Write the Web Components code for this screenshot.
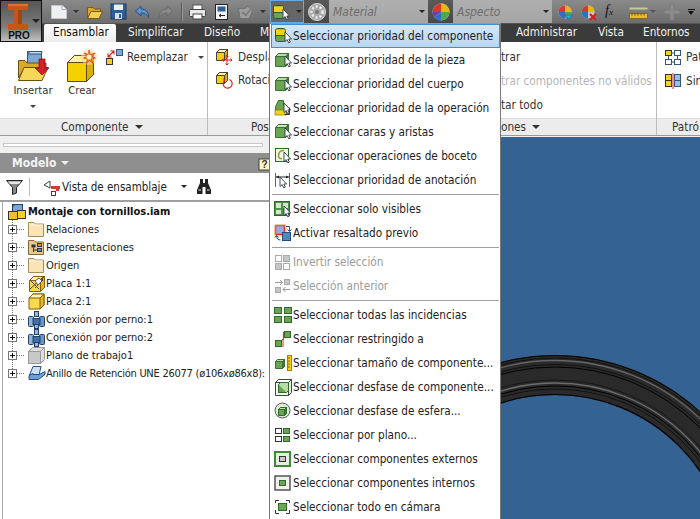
<!DOCTYPE html>
<html>
<head>
<meta charset="utf-8">
<title>Inventor</title>
<style>
html, body { margin: 0; padding: 0; background: #fff; }
body { font-family: "DejaVu Sans Condensed", "Noto Sans", sans-serif; font-size: 12px; }
</style>
</head>
<body>
<app-shell></app-shell>
<script>
const FONT = `"DejaVu Sans Condensed", "Noto Sans", sans-serif`;

// white arrow pointer used by most of the select icons
const cursor = (x, y) => `<path transform="translate(${x} ${y})" d="M0 0V9.5L2.2 7.6 3.7 10.8 5.3 10.1 3.8 7H6.6Z" fill="#fff" stroke="#2b3b4b" stroke-width=".9" stroke-linejoin="round"/>`;
const box = (x, y, w, h, fill, stroke = '#2f6a2c') => `<rect x="${x}.5" y="${y}.5" width="${w - 1}" height="${h - 1}" fill="${fill}" stroke="${stroke}"/>`;
const cube = (x, y, s, d, front, top, side, line) => `<path d="M${x + .5} ${y + d + .5}L${x + d + .5} ${y + .5}H${x + s + d + .5}V${y + s + .5}L${x + s + .5} ${y + s + d + .5}H${x + .5}Z" fill="${front}" stroke="${line}"/><path d="M${x + .5} ${y + d + .5}L${x + d + .5} ${y + .5}H${x + s + d + .5}L${x + s + .5} ${y + d + .5}Z" fill="${top}" stroke="${line}"/><path d="M${x + s + .5} ${y + d + .5}L${x + s + d + .5} ${y + .5}V${y + s + .5}L${x + s + .5} ${y + s + d + .5}Z" fill="${side}" stroke="${line}"/>`;
const G = '#6ba552', GL = '#b9dca8', GD = '#3f7f35', Y = '#f6d312';

const ICONS = {
  comp: `<rect x="1.500" y="1.500" width="10" height="13" rx="2" fill="${G}" stroke="#2f5a2c"/><path d="M2 2.500H11V8H2Z" fill="${Y}"/><path d="M1.500 8.500H11.500" stroke="#2f5a2c"/>${cursor(11, 5)}`,
  part: `${cube(1, 2, 10, 3, G, GL, GD, '#3d6f36')}${cursor(11, 5)}`,
  body: `${cube(1, 2, 10, 3, G, GL, GD, '#3d6f36')}${cursor(11, 5)}`,
  feature: `<path d="M1.5 15.5V7.5L4.5 1.5H9.5V6.5H13V15.5Z" fill="${G}" stroke="#3d6f36"/><rect x="1" y="11" width="11" height="5" fill="${Y}" stroke="#6a6a10" stroke-width=".6"/>${cursor(10, 4)}<path d="M15.5 8.5v7h-5" fill="none" stroke="#333"/>`,
  faces: `${cube(1, 1, 10, 3, G, '#cfe6c2', GD, '#3d6f36')}${cursor(11, 5)}`,
  sketch: `${box(1, 1, 14, 14, '#f1f6e6', '#2f6a2c')}<path d="M10 3.5C6 3 4.500 6 4.500 9 4.500 11 6 12 8 11.500" fill="none" stroke="#8a9a20" stroke-width="1.400"/>${cursor(10, 5)}`,
  annot: `<path d="M1.500 2v14M15.500 2v14" stroke="#2f8a2c"/><path d="M2 6H15" stroke="#222"/><path d="M2 6l3-1.500v3zM15 6l-3-1.500v3z" fill="#222"/>${cursor(6, 6)}`,
  visible: `${box(0, 1, 16, 15, '#4d9448', '#2c6a2a')}<rect x="2" y="3" width="5" height="5" fill="#d6e8c9"/><rect x="9" y="3" width="5" height="5" fill="#d6e8c9"/><rect x="2" y="10" width="5" height="4" fill="#d6e8c9"/>${cursor(10, 6)}`,
  preview: `<rect x="1.500" y="1.500" width="9" height="9" fill="#8fb1de" stroke="#d8381e" stroke-width="1.500"/><rect x="1" y="1" width="11" height="11" fill="none" stroke="#f6c24a" stroke-opacity=".7"/><rect x="8.500" y="8.500" width="8" height="8" fill="#4f86c6" stroke="#1f4f86"/><path d="M12 2.500h3.500V7M13.500 5.500l2 2 2-2M2.500 12c0 3 2 4 4 4M1 13.500l1.500-2 2 2" fill="none" stroke="#1f4f86"/>`,
  invert: `<rect x="1.500" y="2.500" width="6" height="6" fill="#fff" stroke="#aaa"/><rect x="9.500" y="2.500" width="6" height="6" fill="#c6c6c6" stroke="#aaa"/><rect x="1.500" y="10.500" width="6" height="6" fill="#c6c6c6" stroke="#aaa"/><rect x="9.500" y="10.500" width="6" height="6" fill="#fff" stroke="#aaa"/>`,
  prev: `<path d="M1 5.500H8M6 3l2.500 2.500L6 8M9 12.500H16M11.500 10L9 12.500 11.500 15" fill="none" stroke="#9a9a9a"/><rect x="10.500" y="2.500" width="5" height="5" fill="#c6c6c6" stroke="#aaa"/><rect x="1.500" y="10.500" width="5" height="5" fill="#c6c6c6" stroke="#aaa"/>`,
  all: `${box(0, 1, 8, 7, G)}${box(10, 1, 8, 7, G)}${box(0, 10, 8, 7, G)}${box(10, 10, 8, 7, G)}`,
  constrained: `${box(10, 1, 7, 7, G)}${box(1, 10, 7, 7, G)}<path d="M9.500 2v7.500H8" fill="none" stroke="#d8381e" stroke-width="1.200"/><path d="M9 9v8" stroke="#d8381e"/>`,
  size: `${cube(1, 5, 7, 2, G, GL, GD, '#3d6f36')}<rect x="13.500" y="1.500" width="4" height="15" fill="${Y}" stroke="#b0781a"/><path d="M14 4h2M14 7h2M14 10h2M14 13h2" stroke="#8a5a10"/>`,
  offset: `${cube(1, 1, 13, 3, '#f4f8f0', '#fff', '#e4ecdc', '#3a4a3a')}<rect x="4.500" y="6.500" width="8" height="8" fill="${G}" stroke="#2f6a2c"/><path d="M4.500 6.500l2-2h8v8l-2 2" fill="${GL}" stroke="#2f6a2c"/>`,
  sphere: `<circle cx="8.500" cy="8.500" r="7.500" fill="#dfe8da" stroke="#4a5a4a"/>${cube(4, 5, 6, 2, G, GL, GD, '#2f6a2c')}`,
  plane: `<rect x="1.500" y="2.500" width="6" height="5" fill="#fff" stroke="#333"/><rect x="1.500" y="10.500" width="6" height="5" fill="#fff" stroke="#333"/><rect x="9.500" y="2.500" width="6" height="5" fill="${G}" stroke="#2f6a2c"/><rect x="9.500" y="10.500" width="6" height="5" fill="${G}" stroke="#2f6a2c"/>`,
  external: `<rect x="1" y="2" width="15" height="14" fill="#e6efdd" stroke="#3f8a36" stroke-width="2"/><rect x="5.500" y="6.500" width="6" height="5" fill="#c8c8c8" stroke="#333"/>`,
  internal: `<rect x="1" y="2" width="15" height="14" fill="#f0f0f0" stroke="#555" stroke-width="1.500"/><rect x="5.500" y="6.500" width="6" height="5" fill="${G}" stroke="#2f6a2c"/>`,
  camera: `<path d="M1.500 5V2.500H5M12 2.500h3.500V5M1.500 12v3.500H5M12 15.500h3.500V12" fill="none" stroke="#333"/><rect x="4.500" y="5.500" width="8" height="7" fill="${G}" stroke="#2f6a2c"/>`,

  // quick access toolbar
  doc: `<path d="M1.500 1.500H12L16.500 5.500V14.500H1.500Z" fill="#eef0f2" stroke="#c4c8cc"/><path d="M12 1.500V5.500H16.500" fill="#fff" stroke="#aab"/>`,
  open: `<path d="M1.500 3.500H7L8.500 5H14.500V8H5L1.500 14Z" fill="#d9a928" stroke="#7a5a10"/><path d="M5 7.500H16.500L13 14.500H1.500Z" fill="#f3cf5c" stroke="#7a5a10"/>`,
  save: `<rect x="1" y="1" width="15" height="15" fill="#2f5f96" stroke="#163a66"/><rect x="4" y="1.500" width="9" height="5.500" fill="#e6eef6"/><rect x="5" y="10" width="7" height="6" fill="#d4dde6"/><rect x="9" y="11" width="2" height="4" fill="#2f5f96"/>`,
  undo: `<path d="M7 2L1.500 7 7 12V9C10.500 9 13 10 14.500 13.500 15 8 12 5 7 5Z" fill="#5b94cc" stroke="#24507f"/>`,
  redo: `<path d="M9 2L14.500 7 9 12V9C5.500 9 3 10 1.500 13.500 1 8 4 5 9 5Z" fill="#8a8a8a" stroke="#6a6a6a"/>`,
  print: `<rect x="4" y="1" width="9" height="5" fill="#fff" stroke="#555"/><rect x=".5" y="5.500" width="16" height="7" rx="1" fill="#e8e8e8" stroke="#444"/><rect x="4" y="10" width="9" height="5" fill="#fff" stroke="#444"/>`,
  sheet: `<rect x="1.500" y=".5" width="12" height="15" fill="#f4f4f4" stroke="#222"/><rect x="3.500" y="2.500" width="8" height="5" fill="#2f5f96"/><path d="M5 11.500H11M5 11.500l2-1.500M5 11.500l2 1.500" stroke="#222" fill="none"/>`,
  update: `<path d="M1.500 4.500H8L11 2 15.500 7 12 14.500H3Z" fill="#9d9d9d" stroke="#6f6f6f"/><path d="M5 8l4 3 4-5" fill="none" stroke="#7c7c7c" stroke-width="2"/>`,
  wheel: `<circle cx="10" cy="10" r="8.500" fill="#a9a9a9" stroke="#d9d9d9"/><circle cx="10" cy="10" r="5.500" fill="none" stroke="#eee" stroke-width="2.500" stroke-dasharray="2 2"/><circle cx="10" cy="10" r="2" fill="#777"/>`,
  colors: `<circle cx="10" cy="10" r="8.500" fill="#e8e8e8"/><path d="M10 10V1.500A8.500 8.500 0 0 1 18.500 10Z" fill="#e8b80f"/><path d="M10 10H18.500A8.500 8.500 0 0 1 10 18.500Z" fill="#4cab48"/><path d="M10 10V18.500A8.500 8.500 0 0 1 3 15Z" fill="#2f6fc4"/><path d="M10 10L3 15A8.500 8.500 0 0 1 1.500 10Z" fill="#6a3fa8"/><path d="M10 10H1.500A8.500 8.500 0 0 1 10 1.500Z" fill="#d8382e"/>`,
  adjust: `<circle cx="8" cy="8" r="6.500" fill="#c8c8c8"/><path d="M8 8V1.500A6.500 6.500 0 0 1 14.500 8Z" fill="#e8b80f"/><path d="M8 8H1.500A6.500 6.500 0 0 1 8 1.500Z" fill="#d8382e"/><path d="M8 8V14.500A6.500 6.500 0 0 1 1.500 8Z" fill="#2f6fc4"/><path d="M8 8H14.500A6.500 6.500 0 0 1 8 14.500Z" fill="#4cab48"/><path d="M8 11H16L12 15.500Z" fill="#2aa7d8" stroke="#0f6a8a" stroke-width=".6"/>`,
  clear: `<circle cx="8" cy="8" r="6.500" fill="#c8c8c8"/><path d="M8 8V1.500A6.500 6.500 0 0 1 14.500 8Z" fill="#e8b80f"/><path d="M8 8H1.500A6.500 6.500 0 0 1 8 1.500Z" fill="#d8382e"/><path d="M8 8V14.500A6.500 6.500 0 0 1 1.500 8Z" fill="#2f6fc4"/><path d="M10 10l6 6M16 10l-6 6" stroke="#d8201e" stroke-width="2.200"/>`,
  measure: `<rect x=".5" y="3.500" width="18" height="2" fill="#c8c8a0"/><rect x=".5" y="9.500" width="18" height="5" fill="#e8b830" stroke="#8a6a10"/><path d="M3 9.500v2M6 9.500v2M9 9.500v2M12 9.500v2M15 9.500v2" stroke="#6a4a10"/>`,
  plus: `<path d="M6 0h4v6h6v4h-6v6H6v-6H0V6h6Z" fill="#8c8c8c" stroke="#7a7a7a"/>`,

  // ribbon
  insert: `<rect x="10.500" y="1.500" width="14" height="13" fill="#7ea6d6" stroke="#33557f"/><path d="M10.500 4L13 1.500H25L24.500 4Z" fill="#c4d8ee" stroke="#33557f"/><path d="M1.500 10.500H8L10 13H29V20H6L1.500 28Z" fill="#d9a928" stroke="#6a5010"/><path d="M7 17.500H31L25 30.500H1.500Z" fill="#f6d75a" stroke="#6a5010"/><path d="M22 9h6v9h4l-7 7-7-7h4Z" fill="#d8201e" stroke="#7a1010" stroke-width=".7"/>`,
  create: `${cube(0, 5, 19, 7, '#f5d000', '#fff2a8', '#d9b000', '#5a4a10')}<circle cx="22" cy="7" r="8" fill="#ffd9a0" opacity=".6"/><path d="M22 0l1.500 4.500L28 3l-3 3.500 3.500 1.500-4 1 1.500 4.500-3.500-3-3.500 3 1.500-4.500-4-1 3.500-1.500-3-3.500 4.500 1.500Z" fill="#f08a1d" stroke="#c8401a" stroke-width=".7"/><circle cx="22" cy="7" r="2.500" fill="#fff3b0"/>`,
  replace: `<rect x=".5" y="9.500" width="6" height="6" fill="${Y}" stroke="#333"/><rect x="10.500" y=".5" width="6" height="6" fill="#7ea6d6" stroke="#33557f"/><path d="M2 8L8 2M2 4.500V8H5.500M4.500 2H8V5.500" fill="none" stroke="#d8201e" stroke-width="1.100"/>`,
  move: `${cube(1, 1, 8, 3, '#f5d000', '#fff2a8', '#d9b000', '#444')}<path d="M12 7v10M7 12h10M12 7l-1.500 1.500M12 7l1.500 1.500M12 17l-1.500-1.500M12 17l1.500-1.500M7 12l1.500-1.500M7 12l1.500 1.500M17 12l-1.500-1.500M17 12l-1.500 1.500" stroke="#d8201e" fill="none"/>`,
  rotate: `${cube(1, 1, 8, 3, '#f5d000', '#fff2a8', '#d9b000', '#444')}<path d="M14.500 8.500A4.500 4.500 0 1 1 9 10" fill="none" stroke="#d8201e" stroke-width="1.200"/><path d="M8 7.500l2.500 1-1.500 2.500Z" fill="#d8201e"/>`,
  pattern: `<rect x=".5" y=".5" width="6" height="5" fill="${Y}" stroke="#333"/><rect x="9.500" y=".5" width="6" height="5" fill="#fff" stroke="#33557f"/><rect x=".5" y="9.500" width="6" height="5" fill="#fff" stroke="#33557f"/><rect x="9.500" y="9.500" width="6" height="5" fill="#fff" stroke="#33557f"/><path d="M3.500 6v3M12.500 6v3M7 3h2M7 12h2" stroke="#33557f"/>`,
  mirror: `<rect x=".5" y="1.500" width="6" height="12" fill="${Y}" stroke="#333"/><path d="M1 7.500h5" stroke="#333"/><rect x="9.500" y="1.500" width="6" height="12" fill="#9dbde0" stroke="#33557f"/><path d="M10 7.500h5" stroke="#33557f"/><path d="M8 0v16" stroke="#d8201e"/>`,

  // browser
  funnel: `<path d="M.5 2.500H16.500L10.500 9.500V15L6.500 16.500V9.500Z" fill="#8a8a8a" stroke="#222"/><path d="M2 3.500H15L13 6H4Z" fill="#e6e6e6"/>`,
  view: `<path d="M1 7L7 3V10Z" fill="#fff" stroke="#444"/><rect x="8" y="8" width="9" height="3" fill="#c8402a"/><rect x="13" y="8" width="3" height="5" fill="#c8402a"/><rect x="8.500" y="13.500" width="4" height="4" fill="#fff" stroke="#444"/>`,
  binoculars: `<path d="M4 1h3v4h2V1h3v4l3 7v4H9.500V9h-3v7H1v-4l3-7Z" fill="#222"/><rect x="2.500" y="11" width="2.500" height="2" fill="#889"/><rect x="11" y="11" width="2.500" height="2" fill="#889"/>`,
  help: `<rect x="1" y="1" width="11" height="11" fill="#fff8c8" stroke="#444"/><text x="6.500" y="10" text-anchor="middle" font-size="10" font-weight="700" font-family="Liberation Sans" fill="#333">?</text>`,
  assembly: `<rect x="4.500" y="1.500" width="10" height="10" fill="#7ea6d6" stroke="#22405f"/><path d="M4.500 4L7 1.500H14.500" fill="none" stroke="#22405f"/><rect x="9.500" y="7.500" width="8" height="8" fill="${Y}" stroke="#333"/><rect x=".5" y="8.500" width="9" height="8" fill="#f2bf2a" stroke="#333"/>`,
  folder: `<path d="M.5 15.500V1.500H6L7.500 3H15.500V15.500Z" fill="#fae3b4" stroke="#a58a5a"/><path d="M1 4H15" stroke="#fff6df"/>`,
  repfolder: `<path d="M.5 15.500V1.500H6L7.500 3H15.500V15.500Z" fill="#e8c98c" stroke="#806a3a"/><rect x="3.500" y="5.500" width="4" height="3" fill="#333"/><path d="M5.500 8.500V13M5.500 11H10" stroke="#333"/><rect x="9.500" y="9.500" width="4" height="3" fill="#6a8abf" stroke="#333"/><rect x="9.500" y="4.500" width="4" height="3" fill="#d8a030" stroke="#333"/>`,
  plate1: `${cube(1, 1, 11, 4, '#f7d94c', '#fff2b0', '#e2b820', '#8a5a10')}<path d="M15.500 1.500L1.500 14.500M3 6L11 14M13 3l2 2-8 8" stroke="#444" fill="none"/><path d="M7 6l4-3 3 3-4 4Z" fill="#fff" stroke="#555"/>`,
  plate2: `${cube(.5, .5, 11, 4, '#f7d94c', '#fff2b0', '#e2b820', '#8a5a10')}`,
  bolt: `<rect x=".5" y="5.500" width="5" height="10" rx="1" fill="#8fb1de" stroke="#22405f"/><rect x="11.500" y="5.500" width="5" height="10" rx="1" fill="#6c94c8" stroke="#22405f"/><rect x="5" y="7.500" width="7" height="6" fill="#3f6ea8" stroke="#22405f"/><rect x="6.500" y=".5" width="4" height="5" fill="#9ab8dc" stroke="#22405f"/><rect x="6.500" y="13.500" width="4" height="4" fill="#9ab8dc" stroke="#22405f"/>`,
  plane2: `<rect x=".5" y="4.500" width="12" height="12" fill="#c8c8c8" stroke="#999"/><path d="M.5 4.500L4.500 .5H16.500V12.500L12.500 16.500V4.500H.5" fill="#ddd" stroke="#999"/><path d="M12.500 4.500L16.500 .5" stroke="#999"/>`,
  ring: `<path d="M5 1.500H13L11 10H1.500Z" fill="#cfe0f2" stroke="#1f4f86"/><path d="M1 10.500L5 8.500V9.500H11L17 6.500V9.500L10.500 14.500H1Z" fill="#6fa0d6" stroke="#1f4f86"/>`,
};

function icon(name, w, h) {
  return `<svg width="${w}" height="${h}" viewBox="0 0 ${w} ${h}" style="display:block;flex:none;overflow:visible">${ICONS[name]}</svg>`;
}

class AppShell extends HTMLElement {
  connectedCallback() {
    this.attachShadow({mode: 'open'});
    this.shadowRoot.innerHTML = `<style>
      :host { display: block; position: relative; width: 700px; height: 519px; overflow: hidden; font-family: ${FONT}; background: #fff; }
      .head { display: grid; grid-template-columns: 42px 1fr; grid-template-rows: 24px 18px; }
      app-button { grid-row: 1 / 3; }
      .main { display: flex; height: 383px; }
      select-menu { position: absolute; left: 269px; top: 23px; }
    </style>
    <div class="head"><app-button></app-button><quick-bar></quick-bar><tab-strip></tab-strip></div>
    <ribbon-bar></ribbon-bar>
    <div class="main"><model-browser></model-browser><view-port></view-port></div>
    <select-menu></select-menu>`;
  }
}

class AppButton extends HTMLElement {
  connectedCallback() {
    this.attachShadow({mode: 'open'});
    this.shadowRoot.innerHTML = `<style>
      :host { display: flex; flex-direction: column; box-sizing: border-box; height: 42px; border: 1px solid #111; background: linear-gradient(#555, #7d7d7d 65%, #c0c0c0); }
      .top { display: flex; height: 27px; padding: 3px 0 0 7px; gap: 4px; }
      .arrow { width: 0; height: 0; margin-top: 15px; border: 4px solid transparent; border-top-color: #222; border-bottom: 0; }
      .pro { height: 9px; text-align: center; padding-right: 4px; font: 700 10px/9px "Liberation Sans", sans-serif; color: #111; }
    </style>
    <div class="top">
      <svg width="20" height="26" viewBox="0 0 20 26"><path d="M0 0H20V6H14V20H20V26H0V20H6V6H0Z" fill="#c4561c"/><path d="M10 6H14V20H10Z" fill="#a34415"/><path d="M0 0H20V2H0Z" fill="#dd7434"/></svg>
      <span class="arrow"></span>
    </div>
    <div class="pro">PRO</div>`;
  }
}

class QuickBar extends HTMLElement {
  connectedCallback() {
    this.attachShadow({mode: 'open'});
    const drop = (c = '#333') => `<span class="drop" style="border-top-color:${c}"></span>`;
    this.shadowRoot.innerHTML = `<style>
      :host { display: flex; align-items: center; height: 24px; background: linear-gradient(#8a8a8a, #6d6d6d); overflow: hidden; border-bottom: 1px solid #555; box-sizing: border-box; }
      .drop { flex: none; display: block; width: 0; height: 0; border: 3px solid transparent; border-bottom: 0; }
      .sep { flex: none; width: 1px; height: 18px; background: #5a5a5a; border-right: 1px solid #9a9a9a; }
      .hot { flex: none; display: flex; align-items: center; box-sizing: border-box; width: 34px; height: 23px; padding-left: 1px; gap: 7px; background: #666; border: 1px solid #6aa8de; margin-left: 4px; }
      .tile { flex: none; display: flex; align-items: center; justify-content: center; width: 25px; height: 23px; background: linear-gradient(#5a5a5a, #484848); }
      .combo { flex: none; display: flex; align-items: center; justify-content: space-between; box-sizing: border-box; width: 99px; height: 23px; padding: 0 3px 0 4px; background: linear-gradient(#b0b0b0, #a4a4a4); font: italic 12px ${FONT}; color: #6d6d6d; }
      .ml { flex: none; }
    </style>
    <span class="ml" style="margin-left:8px">${icon('doc', 17, 16)}</span>
    <span class="ml" style="margin-left:6px">${drop()}</span>
    <span class="ml" style="margin-left:7px">${icon('open', 17, 16)}</span>
    <span class="ml" style="margin-left:7px">${icon('save', 17, 17)}</span>
    <span class="ml" style="margin-left:7px">${icon('undo', 16, 15)}</span>
    <span class="ml" style="margin-left:8px">${icon('redo', 16, 15)}</span>
    <span class="sep" style="margin-left:7px"></span>
    <span class="ml" style="margin-left:6px">${icon('print', 17, 16)}</span>
    <span class="ml" style="margin-left:8px">${icon('sheet', 14, 16)}</span>
    <span class="ml" style="margin-left:9px">${icon('update', 16, 16)}</span>
    <span class="ml" style="margin-left:7px">${drop()}</span>
    <span class="hot">${icon('comp', 17, 16)}${drop('#222')}</span>
    <span class="tile">${icon('wheel', 20, 20)}</span>
    <span class="combo"><span>Material</span>${drop('#222')}</span>
    <span class="tile">${icon('colors', 20, 20)}</span>
    <span class="combo"><span>Aspecto</span>${drop('#222')}</span>
    <span class="ml" style="margin-left:5px">${icon('adjust', 16, 16)}</span>
    <span class="ml" style="margin-left:7px">${icon('clear', 16, 16)}</span>
    <span class="ml" style="margin-left:9px;font:italic 14px 'Liberation Serif',serif;color:#111;width:16px;line-height:16px">f<span style="font-size:9px">x</span></span>
    <span class="ml" style="margin-left:8px">${icon('measure', 19, 15)}</span>
    <span class="ml" style="margin-left:2px">${drop('#555')}</span>
    <span class="ml" style="margin-left:8px">${icon('plus', 16, 16)}</span>
    <span class="ml" style="margin-left:8px;width:7px;height:6px;border-top:1px solid #111;box-sizing:border-box"><span class="drop" style="border-top-color:#111;border-width:4px 3.500px 0;margin-top:1px"></span></span>`;
  }
}

class TabStrip extends HTMLElement {
  connectedCallback() {
    this.attachShadow({mode: 'open'});
    const tabs = [['Ensamblar', 2, 72, 1], ['Simplificar', 12, 56], ['Diseño', 20, 36], ['M', 20, 12], ['Administrar', 244, 62], ['Vista', 20, 25], ['Entornos', 20, 47]];
    this.shadowRoot.innerHTML = `<style>
      :host { display: flex; height: 18px; background: #3b3b3b; color: #f0f0f0; font-size: 11.700px; line-height: 17px; white-space: nowrap; }
      span { flex: none; box-sizing: border-box; }
      .on { background: linear-gradient(#fff, #ececec); color: #111; padding-left: 9px; border-radius: 2px 2px 0 0; }
    </style>
    ${tabs.map(t => `<span class="${t[3] ? 'on' : ''}" style="margin-left:${t[1]}px;width:${t[2]}px">${t[0]}</span>`).join('')}`;
  }
}

// one group of the ribbon, with its title bar at the bottom
class RibbonPanel extends HTMLElement {
  connectedCallback() {
    this.attachShadow({mode: 'open'});
    this.shadowRoot.innerHTML = `<style>
      :host { display: flex; flex-direction: column; flex: none; box-sizing: border-box; width: var(--w); border-right: 1px solid #bdbdbd; }
      .body { flex: 1; min-height: 0; }
      .foot { height: 17px; box-sizing: border-box; background: #ececec; border-top: 1px solid #dedede; padding-left: var(--foot); font-size: 11.700px; line-height: 16px; color: #333; display: flex; align-items: center; gap: 6px; white-space: nowrap; }
      .foot b { display: var(--arrow, block); width: 0; height: 0; border: 4px solid transparent; border-top-color: #333; border-bottom: 0; }
    </style>
    <div class="body"><slot></slot></div>
    <div class="foot"><slot name="title"></slot><b></b></div>`;
  }
}

class RibbonBar extends HTMLElement {
  connectedCallback() {
    this.attachShadow({mode: 'open'});
    this.shadowRoot.innerHTML = `<style>
      :host { display: flex; height: 94px; box-sizing: border-box; background: #fff; border-bottom: 1px solid #9a9a9a; font-size: 11.700px; color: #333; overflow: hidden; }
      .big { display: flex; padding: 8px 0 0 13px; gap: 12px; font-size: 11.200px; }
      .bigbtn { display: flex; flex-direction: column; align-items: center; width: 40px; line-height: 16px; gap: 1px; }
      .down { display: block; width: 0; height: 0; border: 3px solid transparent; border-top-color: #444; border-bottom: 0; margin-top: 5px; }
      .col { display: flex; flex-direction: column; }
      .line { display: flex; align-items: center; gap: 5px; height: 18px; white-space: nowrap; }
      .mute { color: #b5b5b5; }
      .drop { width: 0; height: 0; border: 3px solid transparent; border-top-color: #444; border-bottom: 0; margin-left: 6px; }
      .comp { display: flex; }
    </style>
    <ribbon-panel style="--w:208px;--foot:61px">
      <div class="comp">
        <div class="big">
          <div class="bigbtn">${icon('insert', 33, 32)}<span>Insertar</span><i class="down"></i></div>
          <div class="bigbtn" style="width:34px">${icon('create', 30, 32)}<span>Crear</span></div>
        </div>
        <div class="line" style="margin:6px 0 0 7px;gap:4px;font-size:11.400px">${icon('replace', 17, 16)}<span>Reemplazar</span><i class="drop"></i></div>
      </div>
      <span slot="title">Componente</span>
    </ribbon-panel>
    <ribbon-panel style="--w:240px;--foot:43px;--arrow:none">
      <div class="col" style="padding:6px 0 0 7px;gap:5px">
        <div class="line">${icon('move', 18, 18)}<span>Despla</span></div>
        <div class="line">${icon('rotate', 18, 18)}<span>Rotaci</span></div>
      </div>
      <span slot="title">Pos</span>
    </ribbon-panel>
    <ribbon-panel style="--w:209px;--foot:53px">
      <div class="col" style="padding:6px 0 0 53px;gap:6px">
        <div class="line">trar</div>
        <div class="line mute">trar componentes no válidos</div>
        <div class="line">tar todo</div>
      </div>
      <span slot="title">ones</span>
    </ribbon-panel>
    <ribbon-panel style="--w:43px;--foot:15px;--arrow:none;border:0">
      <div class="col" style="padding:6px 0 0 8px;gap:6px">
        <div class="line">${icon('pattern', 16, 15)}<span>Pat</span></div>
        <div class="line">${icon('mirror', 16, 16)}<span>Sin</span></div>
      </div>
      <span slot="title">Patró</span>
    </ribbon-panel>`;
  }
}

class ModelBrowser extends HTMLElement {
  connectedCallback() {
    this.attachShadow({mode: 'open'});
    this.shadowRoot.innerHTML = `<style>
      :host { display: flex; flex-direction: column; flex: none; width: 271px; background: #fff; color: #222; font-size: 11.500px; overflow: hidden; }
      .grip { flex: none; height: 17px; box-sizing: border-box; background: #f0f0f0; padding: 7px 8px 0 3px; }
      .grip i { display: block; height: 2px; border: 1px solid #c8c8c8; background: #fff; }
      .title { flex: none; display: flex; align-items: center; gap: 5px; height: 20px; box-sizing: border-box; padding: 0 0 0 12px; background: #8f8f8f; color: #f4f4f4; font-weight: 700; font-size: 12px; }
      .title i { width: 0; height: 0; border: 4px solid transparent; border-top-color: #eee; border-bottom: 0; }
      .title span.help { margin-left: auto; margin-top: 2px; }
      .bar { flex: none; display: flex; align-items: center; height: 29px; box-sizing: border-box; padding-left: 6px; background: #fff; border-bottom: 2px solid #a0a0a0; }
      .sep { width: 1px; height: 18px; background: #bbb; margin: 0 13px 0 6px; }
      .drop { width: 0; height: 0; border: 3.500px solid transparent; border-top-color: #222; border-bottom: 0; margin: 0 9px 0 14px; }
      .tree { flex: 1; border-left: 1px solid #a8a8a8; margin-left: 2px; overflow: hidden; }
    </style>
    <div class="grip"><i></i></div>
    <div class="title"><span>Modelo</span><i></i><span class="help">${icon('help', 13, 13)}</span></div>
    <div class="bar">
      ${icon('funnel', 17, 17)}<span class="sep"></span>
      ${icon('view', 18, 18)}<span style="margin-left:1px">Vista de ensamblaje</span><i class="drop"></i>${icon('binoculars', 16, 17)}
    </div>
    <div class="tree">
      <tree-row root icon="assembly">Montaje con tornillos.iam</tree-row>
      <tree-row icon="folder">Relaciones</tree-row>
      <tree-row icon="repfolder">Representaciones</tree-row>
      <tree-row icon="folder">Origen</tree-row>
      <tree-row icon="plate1">Placa 1:1</tree-row>
      <tree-row icon="plate2">Placa 2:1</tree-row>
      <tree-row icon="bolt">Conexión por perno:1</tree-row>
      <tree-row icon="bolt">Conexión por perno:2</tree-row>
      <tree-row icon="plane2">Plano de trabajo1</tree-row>
      <tree-row last icon="ring" style="letter-spacing:-.25px">Anillo de Retención UNE 26077 (ø106xø86x8):</tree-row>
    </div>`;
  }
}

class TreeRow extends HTMLElement {
  connectedCallback() {
    this.attachShadow({mode: 'open'});
    const root = this.hasAttribute('root');
    const last = this.hasAttribute('last');
    const plus = `<svg width="22" height="18" viewBox="0 0 22 18" style="flex:none;display:block">
      <path d="M9.500 0V${last ? 9 : 18}M14 9.500H22" stroke="#777" stroke-dasharray="1 1"/>
      <rect x="5.500" y="5.500" width="8" height="8" fill="#fff" stroke="#777"/><path d="M7 9.500H12M9.500 7V12" stroke="#111"/></svg>`;
    this.shadowRoot.innerHTML = `<style>
      :host { display: flex; align-items: center; height: 18px; white-space: nowrap; font-size: 11px; color: #222; }
      :host([root]) { font-weight: 700; color: #111; padding-left: 5px; }
      .ic { flex: none; margin: 0 2px 0 ${root ? 0 : 3}px; }
    </style>
    ${root ? '' : plus}<span class="ic">${icon(this.getAttribute('icon'), root ? 18 : 16, 17)}</span><slot></slot>`;
  }
}

class ViewPort extends HTMLElement {
  connectedCallback() {
    this.attachShadow({mode: 'open'});
    // ring centred at (555, 570) on the page, the svg begins at (271, 136)
    const bands = [[195, '#2a2a2a', 40], [214.500, '#000', 1], [212, '#111', 1], [209.500, '#666', 1.300], [205.500, '#111', 1], [203, '#000', 1], [190, '#111', .8], [187, '#6a6a6a', 1.300], [184, '#000', 1], [181, '#111', 1], [175.500, '#000', 1.200]];
    const circles = bands.map(([r, col, w]) => `<circle cx="284" cy="434" r="${r}" fill="none" stroke="${col}" stroke-width="${w}"/>`).join('');
    this.shadowRoot.innerHTML = `<style>
      :host { display: block; flex: 1; background: #f0f0f0; overflow: hidden; }
      svg { display: block; }
    </style>
    <svg width="429" height="383" viewBox="0 0 429 383">
      <rect x="0" y="1" width="429" height="382" fill="#336293"/>
      ${circles}
    </svg>`;
  }
}

class SelectMenu extends HTMLElement {
  connectedCallback() {
    this.attachShadow({mode: 'open'});
    this.shadowRoot.innerHTML = `<style>
      :host { display: block; width: 232px; height: 500px; box-sizing: border-box; background: #fff; border: 1px solid #777; border-top-color: #999; padding: 0 0 0 1px; }
      hr { height: 1px; border: 0; background: #a0a0a0; margin: 2px 1px; }
    </style>
    <menu-item hot icon="comp">Seleccionar prioridad del componente</menu-item>
    <menu-item icon="part">Seleccionar prioridad de la pieza</menu-item>
    <menu-item icon="body">Seleccionar prioridad del cuerpo</menu-item>
    <menu-item icon="feature">Seleccionar prioridad de la operación</menu-item>
    <menu-item icon="faces">Seleccionar caras y aristas</menu-item>
    <menu-item icon="sketch">Seleccionar operaciones de boceto</menu-item>
    <menu-item icon="annot">Seleccionar prioridad de anotación</menu-item>
    <hr>
    <menu-item icon="visible">Seleccionar solo visibles</menu-item>
    <menu-item icon="preview">Activar resaltado previo</menu-item>
    <hr>
    <menu-item off icon="invert">Invertir selección</menu-item>
    <menu-item off icon="prev">Selección anterior</menu-item>
    <hr>
    <menu-item icon="all">Seleccionar todas las incidencias</menu-item>
    <menu-item icon="constrained">Seleccionar restringido a</menu-item>
    <menu-item icon="size">Seleccionar tamaño de componente...</menu-item>
    <menu-item icon="offset">Seleccionar desfase de componente...</menu-item>
    <menu-item icon="sphere">Seleccionar desfase de esfera...</menu-item>
    <menu-item icon="plane">Seleccionar por plano...</menu-item>
    <menu-item icon="external">Seleccionar componentes externos</menu-item>
    <menu-item icon="internal">Seleccionar componentes internos</menu-item>
    <menu-item icon="camera">Seleccionar todo en cámara</menu-item>`;
  }
}

class MenuItem extends HTMLElement {
  connectedCallback() {
    this.attachShadow({mode: 'open'});
    this.shadowRoot.innerHTML = `<style>
      :host { display: flex; align-items: center; box-sizing: border-box; height: 24px; padding-left: 3px; gap: 1px; white-space: nowrap; font-size: 11.700px; color: #222; }
      :host([hot]) { background: linear-gradient(#d5e7f8, #b7d5f0); outline: 1px solid #3f8fd0; outline-offset: -1px; }
      :host([off]) { color: #9a9a9a; }
    </style>
    ${icon(this.getAttribute('icon'), 18, 18)}<slot></slot>`;
  }
}

customElements.define('app-shell', AppShell);
customElements.define('app-button', AppButton);
customElements.define('quick-bar', QuickBar);
customElements.define('tab-strip', TabStrip);
customElements.define('ribbon-panel', RibbonPanel);
customElements.define('ribbon-bar', RibbonBar);
customElements.define('model-browser', ModelBrowser);
customElements.define('tree-row', TreeRow);
customElements.define('view-port', ViewPort);
customElements.define('select-menu', SelectMenu);
customElements.define('menu-item', MenuItem);
</script>
</body>
</html>
